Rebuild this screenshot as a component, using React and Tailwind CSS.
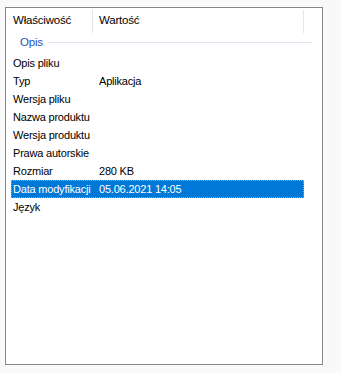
import React from "react";

const rows = [
  ["Opis pliku", ""],
  ["Typ", "Aplikacja"],
  ["Wersja pliku", ""],
  ["Nazwa produktu", ""],
  ["Wersja produktu", ""],
  ["Prawa autorskie", ""],
  ["Rozmiar", "280 KB"],
  ["Data modyfikacji", "05.06.2021 14:05", true],
  ["Język", ""],
];

export default function App() {
  return (
    <div
      className="w-[341px] h-[373px] bg-[#f9f9f9] pt-[7px] pl-[5px] text-[11px] tracking-[-0.2px] text-black"
      style={{ fontFamily: '"Liberation Sans", Arial, sans-serif' }}
    >
      <div className="w-[318px] h-[358px] border border-[#828790] bg-white">
        {/* column headers */}
        <div className="flex h-[26px] items-center">
          <div className="w-[86px] pl-[7px] text-[11.5px]">Właściwość</div>
          <div className="w-px h-[23px] bg-[#e5e5e5]" />
          <div className="w-[210px] pl-[6px] text-[11.5px]">Wartość</div>
          <div className="w-px h-[23px] bg-[#e5e5e5]" />
        </div>

        {/* group */}
        <div className="flex items-center h-[17px] pl-[14px] pr-[10px]">
          <span className="text-[#2a4fb8] text-[11.5px]">Opis</span>
          <div className="ml-[5px] flex-1 h-px bg-[#dde6f0]" />
        </div>

        <div className="mt-[3px] pl-[5px]">
          {rows.map(([name, value, sel]) => (
            <div
              key={name}
              className={
                sel
                  ? "flex items-center h-[18px] w-[293px] bg-[#0078d7] text-white border border-dotted border-[#f7941d]"
                  : "flex items-center h-[18px] w-[293px] border border-transparent"
              }
            >
              <div className="w-[87px] pl-[1px] whitespace-nowrap">{name}</div>
              <div className="whitespace-nowrap">{value}</div>
            </div>
          ))}
        </div>
      </div>
    </div>
  );
}
